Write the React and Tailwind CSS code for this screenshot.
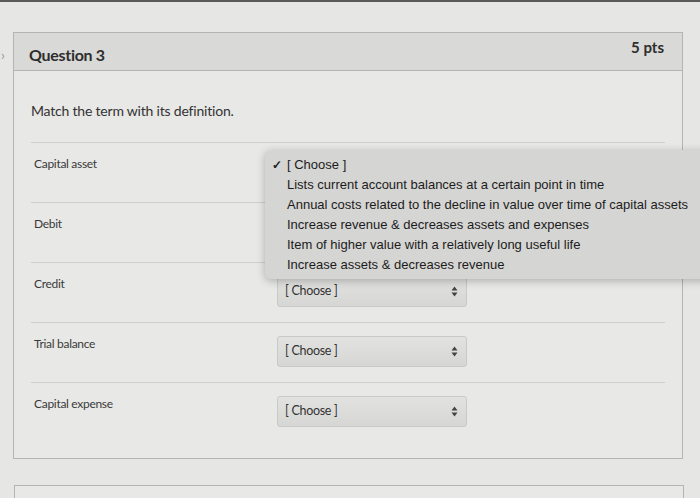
import React from "react";

const rows = ["Capital asset", "Debit", "Credit", "Trial balance", "Capital expense"];

const options = [
  "Lists current account balances at a certain point in time",
  "Annual costs related to the decline in value over time of capital assets",
  "Increase revenue & decreases assets and expenses",
  "Item of higher value with a relatively long useful life",
  "Increase assets & decreases revenue",
];

const SelectBox = () => (
  <div className="flex h-[31px] w-[190px] items-center justify-between rounded-[3px] border border-[#c9c9c7] bg-gradient-to-b from-[#e2e2e0] to-[#d6d6d4] pl-[7px] pr-[8px] text-[12.5px] tracking-[-0.3px] text-[#333]">
    <span>[ Choose ]</span>
    <svg width="7" height="11" viewBox="0 0 7 11" className="text-[#444]">
      <path d="M3.5 0.5 L6.5 4.5 L0.5 4.5 Z" fill="currentColor" />
      <path d="M3.5 10.5 L6.5 6.5 L0.5 6.5 Z" fill="currentColor" />
    </svg>
  </div>
);

export default function App() {
  return (
    <div
      className="relative h-[498px] w-[700px] overflow-hidden border-t-2 border-[#5a5a5a] bg-[#e6e6e4]"
      style={{ fontFamily: "Lato, 'Liberation Sans', sans-serif" }}
    >
      {/* left chevron */}
      <div className="absolute left-[1px] top-[42px] text-[14px] text-[#999]">›</div>

      <div className="ml-[13px] mt-[30px] w-[670px] border border-[#b4b4b2] bg-[#e8e8e6]">
        {/* Header */}
        <div className="flex h-[38px] items-center justify-between border-b border-[#b4b4b2] bg-[#d9d9d7] pl-[15px] pr-[18px]">
          <span className="mt-[6px] text-[16px] font-bold tracking-[-0.3px] text-[#2d2d2d]">Question 3</span>
          <span className="mb-[8px] text-[15px] font-bold text-[#2d2d2d]">5 pts</span>
        </div>

        {/* Body */}
        <div className="px-[17px] pb-[15px] pt-[29px]">
          <p className="text-[14px] tracking-[-0.2px] text-[#333]">Match the term with its definition.</p>
          <div className="mt-[21px] border-t border-[#cfcfcd]">
            {rows.map((r, i) => (
              <div
                key={r}
                className={`flex h-[60px] items-start ${i < rows.length - 1 ? "border-b border-[#cfcfcd]" : ""}`}
              >
                <div className="mt-[12px] w-[246px] pl-[3px] text-[12px] tracking-[-0.3px] text-[#3a3a3a]">{r}</div>
                {i > 1 && (
                  <div className="mt-[13px]">
                    <SelectBox />
                  </div>
                )}
              </div>
            ))}
          </div>
        </div>
      </div>

      {/* next card */}
      <div className="ml-[14px] mt-[26px] h-[40px] w-[670px] border border-[#b4b4b2] bg-[#e8e8e6]" />

      {/* Open dropdown */}
      <div
        className="absolute left-[265px] top-[148px] h-[129px] w-[450px] rounded-[6px] bg-[#d5d5d3] pt-[5px] shadow-[0_2px_8px_rgba(0,0,0,0.25)]"
        style={{ fontFamily: "'Liberation Sans', Arial, sans-serif" }}
      >
        <div className="flex h-[20px] items-center text-[13px] text-[#1c1c1c]">
          <span className="w-[22px] pl-[7px] text-[12px] font-bold">✓</span>
          <span>[ Choose ]</span>
        </div>
        {options.map((o) => (
          <div key={o} className="flex h-[20px] items-center pl-[22px] text-[13px] text-[#1c1c1c]">
            {o}
          </div>
        ))}
      </div>
    </div>
  );
}
